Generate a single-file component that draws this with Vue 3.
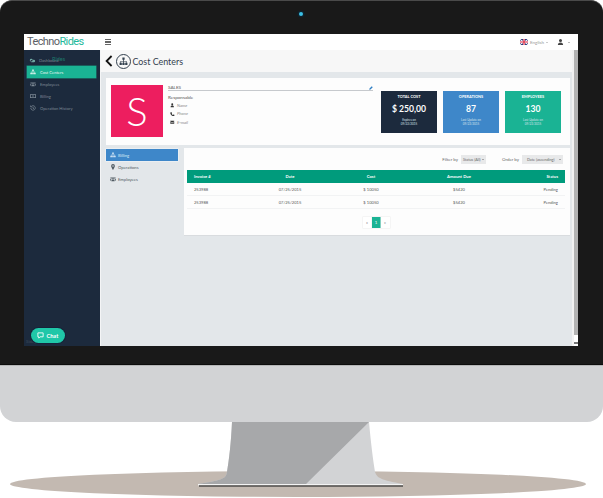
<template>
  <div class="desk">
    <div class="bezel">
      <span class="camera" />
      <div class="screen">
        <aside class="sidebar">
          <div class="logo">Techno<span>Rides</span></div>
          <nav class="nav">
            <span class="ghost">Rides</span>
            <a
              v-for="item in navItems"
              :key="item.label"
              class="nav-item"
              :class="{ active: item.active }"
            >
              <svg viewBox="0 0 16 16" :class="{ line: item.line }"><path :d="icons[item.icon]" fill-rule="evenodd" /></svg>
              {{ item.label }}
            </a>
          </nav>
          <span class="side-note">Sidep</span>
          <button class="chat">
            <svg viewBox="0 0 16 16" class="line"><path :d="icons.comment" /></svg>
            Chat
          </button>
        </aside>

        <div class="main">
          <header class="topbar">
            <div class="burger"><i /><i /><i /></div>
            <div class="lang">
              <svg viewBox="0 0 16 12" class="flag">
                <rect width="16" height="12" rx="3" fill="#2b3a7c" />
                <path d="M0 1l16 10M16 1L0 11" stroke="#fff" stroke-width="2" />
                <path d="M8 0v12M0 6h16" stroke="#fff" stroke-width="4" />
                <path d="M8 0v12M0 6h16" stroke="#d8203c" stroke-width="2.4" />
              </svg>
              English <b class="caret" />
            </div>
            <div class="account">
              <svg viewBox="0 0 16 16"><path :d="icons.user" /></svg>
              <b class="caret" />
            </div>
          </header>

          <div class="body">
            <div class="page">
              <div class="title-bar">
                <svg viewBox="0 0 8 12" class="back"><path d="M6.6 1L1.6 6l5 5" /></svg>
                <span class="title-icon"><svg viewBox="0 0 16 16"><path :d="icons.sitemap" /></svg></span>
                <h1>Cost Centers</h1>
              </div>

              <div class="content">
                <section class="summary">
                  <div class="avatar">S</div>
                  <div class="info">
                    <div class="name">
                      SALES
                      <svg viewBox="0 0 16 16"><path :d="icons.pencil" /></svg>
                    </div>
                    <p class="resp">Responsable</p>
                    <p v-for="c in contacts" :key="c.label" class="contact">
                      <svg viewBox="0 0 16 16"><path :d="icons[c.icon]" /></svg>
                      <em>{{ c.label }}</em>
                    </p>
                  </div>
                  <div class="stats">
                    <div v-for="s in stats" :key="s.title" class="stat" :class="s.tone">
                      <h3>{{ s.title }}</h3>
                      <strong>{{ s.value }}</strong>
                      <small>{{ s.note }}<br />09/22/2015</small>
                    </div>
                  </div>
                </section>

                <section class="lower">
                  <ul class="tabs">
                    <li v-for="t in tabs" :key="t.label" :class="{ active: t.active }">
                      <svg viewBox="0 0 16 16"><path :d="icons[t.icon]" fill-rule="evenodd" /></svg>
                      {{ t.label }}
                    </li>
                  </ul>

                  <div class="panel">
                    <div class="filters">
                      <label>Filter by</label>
                      <span class="select sel-status">Status (All) <b class="caret" /></span>
                      <label class="order">Order by</label>
                      <span class="select sel-date">Date (ascending) <b class="caret" /></span>
                    </div>
                    <table>
                      <thead>
                        <tr>
                          <th class="c1">Invoice #</th>
                          <th class="c2">Date</th>
                          <th class="c3">Cost</th>
                          <th class="c4">Amount Due</th>
                          <th class="c5">Status</th>
                        </tr>
                      </thead>
                      <tbody>
                        <tr v-for="i in 2" :key="i">
                          <td class="c1">253988</td>
                          <td class="c2">07/25/2015</td>
                          <td class="c3">$ 10050</td>
                          <td class="c4">$5420</td>
                          <td class="c5">Pending</td>
                        </tr>
                      </tbody>
                    </table>
                    <div class="pager">
                      <span>«</span><span class="on">1</span><span>»</span>
                    </div>
                  </div>
                </section>
              </div>
            </div>
            <div class="scrollbar"><i /><b /></div>
          </div>
        </div>
      </div>
    </div>
    <div class="chin" />
    <svg class="stand" viewBox="0 0 603 76" width="603" height="76">
      <ellipse cx="298" cy="62" rx="288" ry="13" fill="#c3b9b1" />
      <path d="M232 0C231 22 229 38 227 50C226 56 224 58 198 62H403C381 58 377 56 375 50C373 38 371 22 369 0Z" fill="#d2d3d5" />
      <path d="M232 0C231 22 229 38 227 50C226 56 224 58 198 62H306L369 0Z" fill="#a7a8aa" />
      <rect x="198" y="62" width="205" height="1.4" fill="#f4f4f4" />
      <rect x="199" y="63.4" width="204" height="1.2" fill="#333" />
    </svg>
  </div>
</template>

<script setup>
// 16×16 图标
const icons = {
  dashboard: 'M5 4a3.2 3.2 0 1 1 0 6.4A3.2 3.2 0 0 1 5 4zM11 6a3 3 0 1 1 0 6H6a2.5 2.5 0 0 1 0-5z',
  sitemap: 'M6 1h4v4H8.7v2h4.8v3H15v4h-4v-4h1.3V8.2H8.7V10H10v4H6v-4h1.3V8.2H3.7V10H5v4H1v-4h1.5V7h4.8V5H6z',
  users: 'M8 3a2.5 2.5 0 1 1 0 5 2.5 2.5 0 0 1 0-5zM4.5 9h7l1 5h-9zM3 3.5a2 2 0 1 1 0 4 2 2 0 0 1 0-4zM13 3.5a2 2 0 1 1 0 4 2 2 0 0 1 0-4zM0 8.5h3L2.5 12H0zM13 8.5h3V12h-2.5z',
  money: 'M0 3h16v10H0zM2 5v6h12V5zM8 6a2 2 0 1 1 0 4 2 2 0 0 1 0-4z',
  history: 'M3.5 4a6 6 0 1 1-1.4 4M1.5 1.5v3.5H5M8 5v3.5l2.5 1.5',
  user: 'M8 1a3.5 3.5 0 1 1 0 7 3.5 3.5 0 0 1 0-7zM2 15c0-4 2-6 6-6s6 2 6 6z',
  phone: 'M3 1h3l1.5 4-2 1.5c1 2 2.5 3.5 4.5 4.5l1.5-2.5 4 1.5v3c0 1-1 2-2 2C7 15 1 9 1 3c0-1 1-2 2-2z',
  mail: 'M1 3h14v2L8 9 1 5zM1 7l7 4 7-4v6H1z',
  marker: 'M8 0a5 5 0 0 1 5 5c0 3-5 11-5 11S3 8 3 5a5 5 0 0 1 5-5zM8 3a2 2 0 1 0 0 4 2 2 0 0 0 0-4z',
  pencil: 'M11 1l4 4-9 9-5 1 1-5z',
  comment: 'M2 2h12v9H7l-3 3v-3H2z',
}

const navItems = [
  { label: 'Dashboard', icon: 'dashboard' },
  { label: 'Cost Centers', icon: 'sitemap', active: true },
  { label: 'Employees', icon: 'users' },
  { label: 'Billing', icon: 'money' },
  { label: 'Operation History', icon: 'history', line: true },
]

const contacts = [
  { label: 'Name', icon: 'user' },
  { label: 'Phone', icon: 'phone' },
  { label: 'E-mail', icon: 'mail' },
]

const stats = [
  { title: 'TOTAL COST', value: '$ 250,00', note: 'Expires on', tone: 'navy' },
  { title: 'OPERATIONS', value: '87', note: 'Last Update on', tone: 'blue' },
  { title: 'EMPLOYEES', value: '130', note: 'Last Update on', tone: 'green' },
]

const tabs = [
  { label: 'Billing', icon: 'sitemap', active: true },
  { label: 'Operations', icon: 'marker' },
  { label: 'Employees', icon: 'users' },
]
</script>

<style>
html,
body {
  margin: 0;
  background: #fff;
  overflow: hidden;
}
</style>

<style scoped>
.desk {
  width: 603px;
  height: 498px;
  font-family: Lato, "Open Sans", sans-serif;
  color: #555;
  overflow: hidden;
}
.bezel {
  position: relative;
  box-sizing: border-box;
  height: 365px;
  padding: 34px 25px 19px 24px;
  background: #191919;
  border-radius: 12px 12px 0 0;
  border-top: 1px solid #4a4a4a;
  border-bottom: 1px solid #0c0c0c;
}
.camera {
  position: absolute;
  left: 299px;
  top: 11px;
  width: 4px;
  height: 4px;
  border-radius: 50%;
  background: #3cc0e6;
  box-shadow: 0 0 0 1.5px #10222c;
}
.screen {
  display: flex;
  height: 312px;
  margin-top: -1px;
  background: #e3e7ea;
}
.sidebar {
  position: relative;
  width: 76px;
  flex: none;
  background: #1c2a3d;
}
.logo {
  height: 16px;
  padding-left: 3px;
  background: #fff;
  font-family: Roboto, sans-serif;
  font-size: 11px;
  line-height: 16px;
  color: #5b6166;
  letter-spacing: -0.6px;
}
.logo span {
  color: #1fb99c;
}
.nav {
  position: relative;
  display: flex;
  flex-direction: column;
  padding-top: 4px;
}
.ghost {
  position: absolute;
  left: 28px;
  top: 6px;
  font-size: 5.5px;
  color: #1d7a6c;
}
.nav-item {
  display: flex;
  align-items: center;
  gap: 4px;
  height: 12px;
  margin: 0 4px 0 3px;
  padding-left: 3px;
  font-size: 4.1px;
  color: #7c8894;
}
.nav-item:nth-child(2) svg {
  width: 7px;
  height: 7px;
  margin: 0 -1px 0 -1px;
  color: #6fa8a2;
}
.nav-item svg {
  width: 6px;
  height: 6px;
  flex: none;
  fill: currentColor;
}
.nav-item.active {
  background: #1ab394;
  color: #e8f7f3;
  box-shadow: 0 0 0 0.5px #17907a;
}
.nav-item svg.line,
.chat svg.line {
  fill: none;
  stroke: currentColor;
  stroke-width: 2;
}
.side-note {
  position: absolute;
  left: 2px;
  bottom: 2px;
  font-size: 4.5px;
  color: #3f4b5a;
}
.chat {
  position: absolute;
  left: 7px;
  bottom: 3px;
  display: flex;
  align-items: center;
  gap: 2.5px;
  height: 15px;
  width: 34px;
  padding: 0 0 0 6px;
  border: 0;
  border-radius: 8px;
  background: #20c7a8;
  box-shadow: 0 0 0 1px #16233a;
  font-family: inherit;
  font-size: 5.6px;
  font-weight: 700;
  color: #fff;
}
.chat svg {
  width: 7px;
  height: 7px;
}
.main {
  flex: 1;
  display: flex;
  flex-direction: column;
  min-width: 0;
}
.topbar {
  display: flex;
  align-items: center;
  height: 16px;
  padding-left: 5px;
  background: #fff;
  font-size: 4.5px;
}
.burger {
  display: flex;
  flex-direction: column;
  gap: 1px;
  width: 6px;
}
.burger i {
  height: 1.4px;
  background: #666;
}
.lang {
  display: flex;
  align-items: center;
  gap: 2px;
  margin-left: auto;
  color: #999;
}
.flag {
  width: 8px;
  height: 6px;
}
.caret {
  display: inline-block;
  width: 0;
  height: 0;
  border: 1.4px solid transparent;
  border-top-color: currentColor;
  border-bottom: 0;
  vertical-align: middle;
}
.account {
  display: flex;
  align-items: center;
  gap: 4px;
  margin: 0 8px 0 9px;
  color: #777;
}
.account svg {
  width: 7px;
  height: 8px;
  fill: #444;
}
.body {
  flex: 1;
  display: flex;
  min-height: 0;
}
.page {
  flex: 1;
  min-width: 0;
  border-left: 1px solid #f4f5f6;
}
.title-bar {
  display: flex;
  align-items: center;
  height: 22px;
  padding-left: 4px;
  background: #f7f7f7;
}
.back {
  width: 8px;
  height: 12px;
  fill: none;
  stroke: #111;
  stroke-width: 1.8;
}
.title-icon {
  box-sizing: border-box;
  display: flex;
  align-items: center;
  justify-content: center;
  width: 15px;
  height: 15px;
  margin-left: 3px;
  border: 1px solid #33404e;
  border-radius: 50%;
}
.title-icon svg {
  width: 9px;
  height: 9px;
  fill: #33404e;
}
.title-bar h1 {
  margin: 0 0 0 1.5px;
  font-size: 8.9px;
  font-weight: 400;
  color: #33404e;
}
.content {
  padding: 6px 2px 0 5px;
}
.summary {
  display: flex;
  height: 67px;
  box-sizing: border-box;
  padding: 7px 9px 8px 5px;
  background: #fdfdfd;
}
.avatar {
  width: 52px;
  height: 52px;
  flex: none;
  background: #ed1e5f;
  color: #fff;
  font-size: 40px;
  font-weight: 300;
  line-height: 52px;
  text-align: center;
}
.info {
  flex: 1;
  margin-left: 5px;
  font-size: 4.6px;
}
.name {
  display: flex;
  justify-content: space-between;
  align-items: flex-end;
  height: 5px;
  border-bottom: 1px solid #c6c9cd;
  line-height: 5px;
}
.name svg {
  width: 4px;
  height: 4px;
  fill: #2f7fc4;
}
.resp {
  margin: 3px 0 1px;
  line-height: 6px;
}
.contact {
  display: flex;
  align-items: center;
  gap: 2.5px;
  height: 8.5px;
  margin: 0 0 0 2px;
  font-size: 4.2px;
  color: #888;
}
.contact svg {
  width: 4.5px;
  height: 4.5px;
  fill: #333;
}
.stats {
  display: flex;
  gap: 6px;
  margin: 6px 0 4px 8px;
}
.stat {
  box-sizing: border-box;
  width: 56px;
  height: 42px;
  padding-top: 3px;
  color: #fff;
  text-align: center;
}
.stat.navy {
  background: #1c2a3d;
}
.stat.blue {
  background: #3e87c9;
}
.stat.green {
  background: #1ab394;
}
.stat h3 {
  margin: 0;
  font-size: 3.9px;
  line-height: 5px;
}
.stat strong {
  display: block;
  margin-top: 3px;
  font-size: 8.6px;
  line-height: 14px;
}
.stat small {
  display: block;
  margin-top: 2px;
  font-size: 3px;
  line-height: 4.4px;
  color: #d8e2ea;
}
.lower {
  display: flex;
  gap: 6px;
  margin-top: 3px;
}
.tabs {
  width: 72px;
  flex: none;
  margin: 1px 0 0;
  padding: 0;
  list-style: none;
  font-size: 4.2px;
}
.tabs li {
  display: flex;
  align-items: center;
  gap: 2px;
  height: 12px;
  padding-left: 4px;
  color: #4f5a62;
}
.tabs li.active {
  background: #3e87c9;
  color: #dcebf7;
  box-shadow: 0 0 0 0.5px #f4f7f9;
}
.tabs svg {
  width: 6px;
  height: 6px;
  fill: currentColor;
}
.panel {
  flex: 1;
  box-sizing: border-box;
  height: 87px;
  padding: 0 5px 0 3px;
  background: #fdfdfd;
  box-shadow: 0 1px 0 #d9dcdf;
}
.filters {
  display: flex;
  align-items: center;
  justify-content: flex-end;
  height: 22px;
  padding-right: 2px;
  font-size: 4.4px;
  color: #666;
}
.select {
  box-sizing: border-box;
  display: flex;
  align-items: center;
  justify-content: space-between;
  height: 9px;
  margin-left: 3px;
  padding: 0 2px;
  background: #e8e9ea;
  font-size: 3.8px;
}
.sel-status {
  width: 25px;
}
.sel-date {
  width: 41px;
  padding-left: 5px;
}
.order {
  margin-left: 16px;
}
table {
  width: 378px;
  border-collapse: collapse;
  table-layout: fixed;
  font-size: 4.1px;
}
th,
td {
  padding: 0;
  text-align: center;
}
th {
  height: 13px;
  background: #009b7c;
  color: #fff;
  font-size: 4.2px;
  font-weight: 700;
}
td {
  height: 12px;
  border-bottom: 1px solid #f2f3f4;
  color: #555;
}
.c1 {
  width: 70px;
  padding-left: 7px;
  text-align: left;
  box-sizing: border-box;
}
.c2 {
  width: 66px;
}
.c3 {
  width: 96px;
}
.c4 {
  width: 80px;
}
.c5 {
  width: 66px;
  padding-right: 7px;
  text-align: right;
  box-sizing: border-box;
}
.pager {
  display: flex;
  justify-content: center;
  margin-top: 8px;
  font-size: 4.4px;
  line-height: 11px;
  color: #666;
}
.pager span {
  width: 9px;
  text-align: center;
  background: #fff;
  box-shadow: 0 0 0 0.5px #eee;
}
.pager .on {
  background: #1ab394;
  color: #fff;
}
.scrollbar {
  display: flex;
  flex-direction: column;
  align-items: flex-end;
  width: 6px;
  flex: none;
  background: #f2f2f2;
}
.scrollbar i {
  flex: 1;
  width: 4px;
  background: #b3b3b3;
}
.scrollbar b {
  width: 4px;
  height: 11px;
  background: linear-gradient(#fff 7px, #777 7px, #777 9px, #fff 9px);
}
.chin {
  height: 57px;
  background: #d2d3d5;
  border-top: 1px solid #b5b6b7;
  box-sizing: border-box;
  border-radius: 0 0 16px 16px;
}
.stand {
  display: block;
}
</style>
